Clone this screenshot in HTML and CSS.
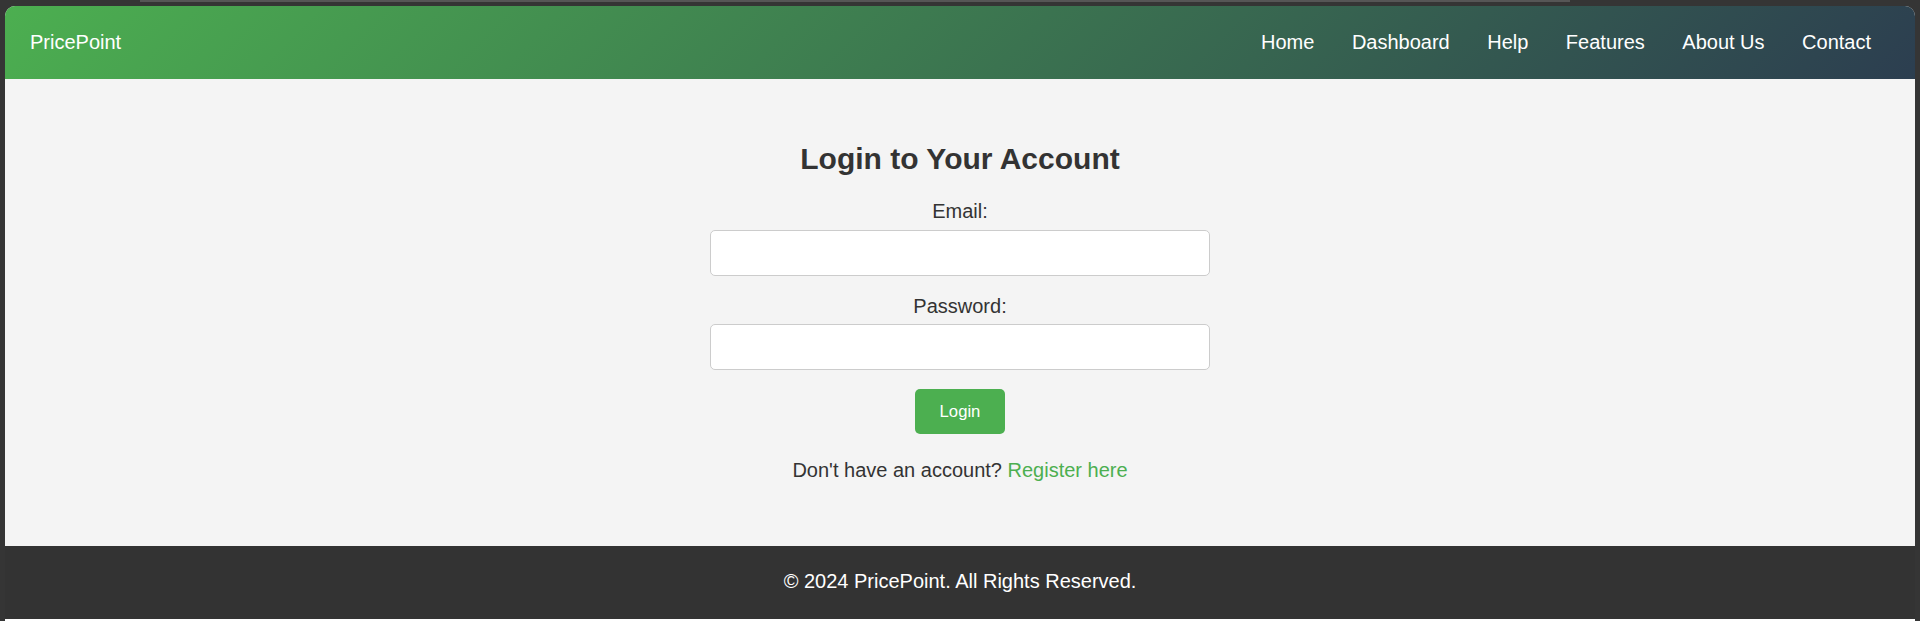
FILE: index.html
```html
<!DOCTYPE html>
<html lang="en">
<head>
<meta charset="utf-8">
<title>PricePoint - Login</title>
<link rel="stylesheet" href="styles.css">
</head>
<body>
<div class="topstrip"><div class="topline"></div></div>
<div class="window">
  <header class="header">
    <div class="logo">PricePoint</div>
    <nav class="nav">
      <a href="#">Home</a>
      <a href="#">Dashboard</a>
      <a href="#">Help</a>
      <a href="#">Features</a>
      <a href="#">About Us</a>
      <a href="#">Contact</a>
    </nav>
  </header>
  <main class="main">
    <h2 class="title">Login to Your Account</h2>
    <form class="form">
      <label class="label" for="email">Email:</label>
      <input class="input" type="email" id="email">
      <label class="label" for="password">Password:</label>
      <input class="input" type="password" id="password">
      <button class="btn" type="button">Login</button>
    </form>
    <p class="register">Don't have an account? <a href="#">Register here</a></p>
  </main>
  <footer class="footer">© 2024 PricePoint. All Rights Reserved.</footer>
  <div class="bottomline"></div>
</div>
</body>
</html>
```

FILE: styles.css
```css
* { box-sizing: border-box; }
html, body {
  margin: 0;
  padding: 0;
  height: 621px;
  overflow: hidden;
  background: #353535;
  font-family: "Liberation Sans", Arial, sans-serif;
  color: #333;
}
.topstrip {
  height: 6px;
}
.topline {
  margin-left: 140px;
  width: 1430px;
  height: 2px;
  background: #565656;
}
.window {
  margin: 0 5px;
  border-radius: 10px 10px 0 0;
  overflow: hidden;
  background: #f4f4f4;
}
.header {
  height: 73px;
  display: flex;
  align-items: center;
  justify-content: space-between;
  padding: 0 44px 0 25px;
  background: linear-gradient(135deg, #4CAF50, #2C3E50);
  color: #fff;
  font-size: 20px;
  line-height: 23px;
}
.nav {
  display: flex;
  gap: 37.5px;
}
.nav a {
  color: #fff;
  text-decoration: none;
}
.main {
  height: 467px;
  display: flex;
  flex-direction: column;
  align-items: center;
  padding-top: 63px;
}
.title {
  margin: 0;
  font-size: 30px;
  line-height: 34px;
  font-weight: bold;
  color: #333;
}
.form {
  display: flex;
  flex-direction: column;
  align-items: center;
  margin-top: 24px;
}
.label {
  font-size: 20px;
  line-height: 23px;
  margin-bottom: 6.5px;
}
.input {
  width: 500px;
  height: 46px;
  margin: 0 0 19px;
  border: 1px solid #ccc;
  border-radius: 5px;
  background: #fff;
  font-size: 16px;
}
.btn {
  margin-top: 0;
  width: 90px;
  height: 45px;
  border: none;
  border-radius: 5px;
  background: #4CAF50;
  color: #fff;
  font-family: "Liberation Sans", Arial, sans-serif;
  font-size: 16.67px;
}
.register {
  margin: 25px 0 0;
  font-size: 20px;
  line-height: 23px;
}
.register a {
  color: #4CAF50;
  text-decoration: none;
}
.footer {
  height: 73px;
  background: #333;
  color: #fff;
  display: flex;
  align-items: center;
  justify-content: center;
  font-size: 20px;
  line-height: 23px;
  padding-bottom: 2px;
}
.bottomline {
  height: 2px;
  background: #fff;
}
```
